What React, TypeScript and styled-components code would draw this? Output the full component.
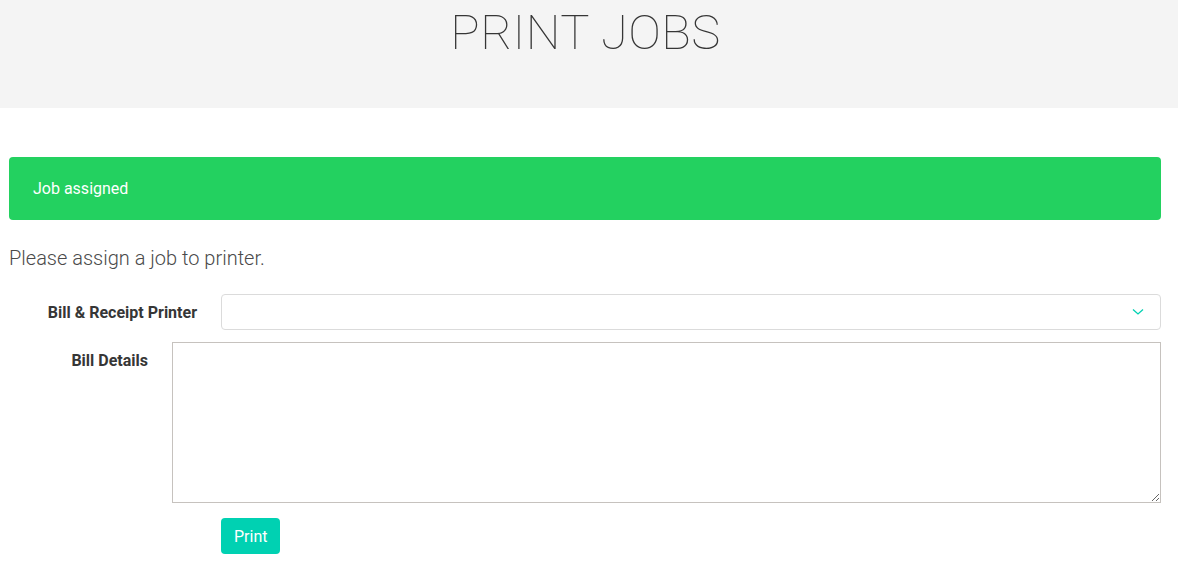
import styled, { createGlobalStyle } from 'styled-components';

const GlobalStyle = createGlobalStyle`
  html, body {
    margin: 0;
    padding: 0;
    background: #ffffff;
    font-family: Roboto, "Liberation Sans", sans-serif;
    color: #4a4a4a;
  }
  * { box-sizing: border-box; }
`;

const Hero = styled.header`
  height: 108px;
  background: #f4f4f4;
  display: flex;
  justify-content: center;
  padding-right: 7px;
`;

const Title = styled.h1`
  margin: 0;
  padding-top: 3px;
  font-size: 49px;
  line-height: 60px;
  font-weight: 100;
  letter-spacing: 0.4px;
  color: #363636;
`;

const Main = styled.main`
  padding: 49px 17px 0 9px;
`;

const Notification = styled.div`
  background: #23d160;
  color: #ffffff;
  border-radius: 4px;
  height: 63px;
  padding: 0 24px;
  display: flex;
  align-items: center;
  font-size: 16px;
`;

const Lead = styled.p`
  margin: 24px 0 0;
  font-size: 20px;
  font-weight: 300;
  line-height: 28px;
  color: #4a4a4a;
`;

const Field = styled.div<{ $labelWidth: number }>`
  display: grid;
  grid-template-columns: ${p => p.$labelWidth}px 1fr;
  column-gap: 24px;
  align-items: start;
`;

const Label = styled.label<{ $top: number }>`
  text-align: right;
  font-weight: 700;
  font-size: 16px;
  color: #363636;
  padding-top: ${p => p.$top}px;
`;

const SelectWrap = styled.div`
  position: relative;
  height: 36px;
  border: 1px solid #dbdbdb;
  border-radius: 4px;
  background: #fff;
`;

const Chevron = styled.svg`
  position: absolute;
  right: 16px;
  top: 13px;
`;

const TextArea = styled.textarea`
  display: block;
  width: 100%;
  height: 161px;
  border: 1px solid #c6c2be;
  border-radius: 0;
  font-family: inherit;
  resize: both;
`;

const PrintButton = styled.button`
  background: #00d1b2;
  color: #fff;
  border: none;
  border-radius: 4px;
  height: 36px;
  padding: 0 13px;
  font-family: inherit;
  font-size: 16px;
  cursor: pointer;
`;

const Form = styled.form`
  margin-top: 22px;
  display: flex;
  flex-direction: column;
  gap: 12px;
`;

const Actions = styled.div`
  padding-left: 212px;
  padding-top: 3px;
`;

export default function App() {
  return (
    <>
      <GlobalStyle />
      <Hero>
        <Title>PRINT JOBS</Title>
      </Hero>
      <Main>
        <Notification>Job assigned</Notification>
        <Lead>Please assign a job to printer.</Lead>
        <Form onSubmit={e => e.preventDefault()}>
          <Field $labelWidth={188}>
            <Label $top={9}>Bill &amp; Receipt Printer</Label>
            <SelectWrap>
              <Chevron width="12" height="8" viewBox="0 0 12 8">
                <path d="M1 1.5 L6 6 L11 1.5" fill="none" stroke="#00d1b2" strokeWidth="1.3" />
              </Chevron>
            </SelectWrap>
          </Field>
          <Field $labelWidth={139}>
            <Label $top={9}>Bill Details</Label>
            <TextArea />
          </Field>
          <Actions>
            <PrintButton type="submit">Print</PrintButton>
          </Actions>
        </Form>
      </Main>
    </>
  );
}
